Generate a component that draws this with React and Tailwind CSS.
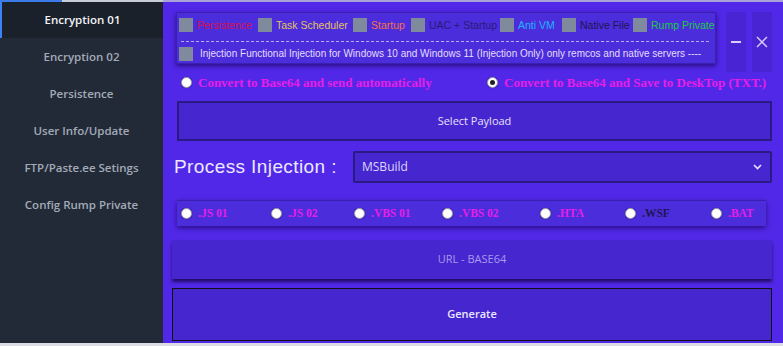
import React from "react";

const sans = { fontFamily: '"Liberation Sans", Arial, sans-serif' };
const serif = { fontFamily: '"Liberation Serif", "Times New Roman", serif' };
const ui = { fontFamily: '"Open Sans", "Noto Sans", sans-serif' };

function Check({ label, color, w }) {
  return (
    <div className={`flex items-center gap-[4px] shrink-0 ${w}`}>
      <div className="w-[14px] h-[14px] bg-[#7f8a9c] shrink-0" />
      <span className={`text-[10.5px] leading-none whitespace-nowrap ${color}`} style={sans}>{label}</span>
    </div>
  );
}

function Radio({ label, color = "text-[#e61ee6]", checked = false, size = "text-[11.5px]", w = "" }) {
  return (
    <div className={`flex items-center gap-[6px] shrink-0 ${w}`}>
      <div className="w-[11px] h-[11px] rounded-full bg-white border border-[#9a9aa8] shrink-0 flex items-center justify-center shadow-[0_0_1px_rgba(0,0,0,0.5)]">
        {checked && <div className="w-[5px] h-[5px] rounded-full bg-[#222]" />}
      </div>
      <span className={`${size} font-bold leading-none whitespace-nowrap ${color}`} style={serif}>{label}</span>
    </div>
  );
}

const menu = ["Encryption 01", "Encryption 02", "Persistence", "User Info/Update", "FTP/Paste.ee Setings", "Config Rump Private"];

export default function App() {
  return (
    <div className="w-[783px] h-[346px] flex flex-col bg-[#dcdce4] overflow-hidden">
      <div className="flex h-[343px]">
        {/* sidebar */}
        <div className="w-[163px] bg-[#222a37] flex flex-col" style={ui}>
          <div className="h-[2px] flex">
            <div className="w-[62px] bg-[#3b7be8]" />
            <div className="flex-1 bg-[#c8ccd4]" />
          </div>
          {menu.map((m, i) => (
            <div
              key={m}
              className={`flex items-center justify-center text-[11.5px] font-semibold ${i === 0 ? "bg-[#1b212b] text-[#f2f4f7] border-l-2 border-[#3b82f6] h-[36px]" : "h-[37px] text-[#a2aab7]"}`}
            >
              {m}
            </div>
          ))}
        </div>

        {/* main */}
        <div className="flex-1 bg-[#5228e8] flex flex-col border-t-2 border-[#a9a2d8] pl-[9px] pr-[11px]">
          {/* top row */}
          <div className="flex mt-[8px] h-[60px]">
            <div className="w-[544px] mt-[2px] h-[54px] pl-[4px]">
              <div className="h-[52px] bg-[#4b2ddc] border border-[#3a1fb0] shadow-[0_2px_5px_rgba(20,0,80,0.7)] pl-[2px] pr-[6px] pt-[5px] overflow-hidden">
                <div className="flex items-center h-[14px]">
                  <Check w="w-[79px]" label="Persistence" color="text-[#d8104c]" />
                  <Check w="w-[95px]" label="Task Scheduler" color="text-[#e4c062]" />
                  <Check w="w-[58px]" label="Startup" color="text-[#f4704c]" />
                  <Check w="w-[89px]" label="UAC + Startup" color="text-[#2a1a78]" />
                  <Check w="w-[62px]" label="Anti VM" color="text-[#1eb4ff]" />
                  <Check w="w-[71px]" label="Native File" color="text-[#1e1650]" />
                  <Check label="Rump Private" color="text-[#20c84a]" />
                </div>
                <div className="mt-[9px] ml-[2px] border-t border-dashed border-[#b8acf0]" />
                <div className="flex items-center gap-[7px] mt-[5px]">
                  <div className="w-[14px] h-[14px] bg-[#7f8a9c] shrink-0" />
                  <span className="text-[10px] leading-none text-[#e4ddfc] whitespace-nowrap" style={sans}>
                    Injection Functional Injection for Windows 10 and Windows 11 (Injection Only) only remcos and native servers ----
                  </span>
                </div>
              </div>
            </div>
            <div className="ml-[10px] mt-[2px] w-[20px] h-[60px] bg-[#4824d2] flex items-center justify-center">
              <div className="w-[10px] h-[1.5px] bg-[#d8d0ff]" />
            </div>
            <div className="ml-[6px] mt-[2px] w-[20px] h-[60px] bg-[#4824d2] flex items-center justify-center">
              <svg width="12" height="12" viewBox="0 0 12 12">
                <path d="M1 1L11 11M11 1L1 11" stroke="#d8d0ff" strokeWidth="1.4" />
              </svg>
            </div>
          </div>

          {/* radios */}
          <div className="flex items-center h-[18px] mt-[3px] pl-[9px]">
            <Radio w="w-[306px]" label="Convert to Base64 and send automatically" size="text-[13px]" />
            <Radio checked label="Convert to Base64 and Save to DeskTop (TXT.)" size="text-[13px]" />
          </div>

          {/* select payload */}
          <div className="ml-[5px] mt-[10px] h-[40px] bg-[#4626ce] border-2 border-[#2c1a84] flex items-center justify-center text-[11px] text-[#e6e0ff]" style={ui}>
            Select Payload
          </div>

          {/* process injection */}
          <div className="flex items-center mt-[10px] h-[32px]">
            <div className="w-[181px] pl-[2px] text-[19px] text-[#ece8ff] tracking-[0.4px]" style={sans}>Process Injection :</div>
            <div className="flex-1 h-[32px] bg-[#4626ce] border-2 border-[#2c1a84] rounded-[2px] flex items-center justify-between pl-[7px] pr-[8px]">
              <span className="text-[12px] text-[#ddd6ff]" style={ui}>MSBuild</span>
              <svg width="9" height="6" viewBox="0 0 9 6">
                <path d="M1 1L4.5 4.5L8 1" stroke="#e8e4ff" strokeWidth="1.6" fill="none" />
              </svg>
            </div>
          </div>

          {/* radio group */}
          <div className="ml-[5px] mr-[6px] mt-[17px] h-[26px] bg-[#4b2ddc] shadow-[0_2px_5px_rgba(20,0,80,0.7)] border-t border-[#3a1fb0] flex items-center pl-[4px]">
            <Radio w="w-[90px]" label=".JS 01" />
            <Radio w="w-[83px]" label=".JS 02" />
            <Radio w="w-[88px]" label=".VBS 01" />
            <Radio w="w-[98px]" label=".VBS 02" />
            <Radio w="w-[85px]" label=".HTA" />
            <Radio w="w-[86px]" label=".WSF" color="text-[#1e1650]" />
            <Radio label=".BAT" />
          </div>

          {/* URL */}
          <div className="mt-[14px] h-[39px] bg-[#4626ce] shadow-[0_3px_3px_rgba(30,10,90,0.9)] flex items-center justify-center text-[11px] text-[#a89af0]" style={ui}>
            URL - BASE64
          </div>

          {/* Generate */}
          <div className="mt-[9px] h-[53px] bg-[#4626ce] border border-[#111] flex items-center justify-center text-[11px] font-semibold text-[#ece8ff]" style={ui}>
            Generate
          </div>
        </div>
      </div>
      <div className="h-[3px] bg-[#dcdce4]" />
    </div>
  );
}
